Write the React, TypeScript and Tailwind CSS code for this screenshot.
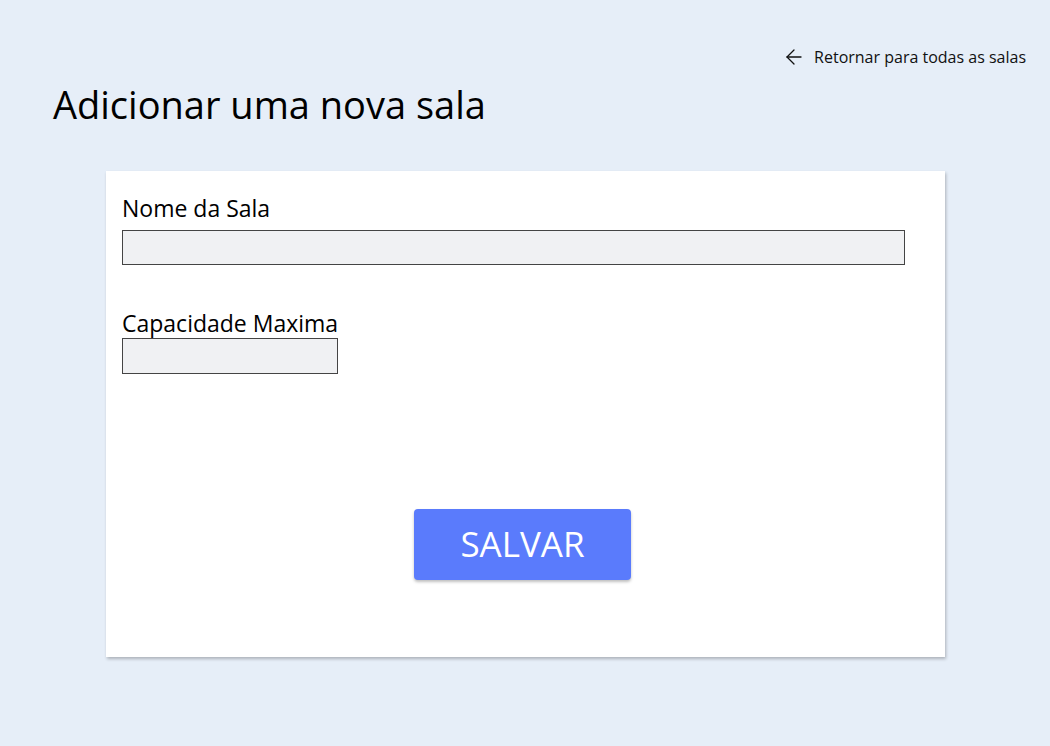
import { ArrowLeft } from "lucide-react";

const App = () => {
  return (
    <div
      className="min-h-screen w-full bg-[#e6eef8] text-black"
      style={{ fontFamily: "'Open Sans', Lato, sans-serif" }}
    >
      {/* Back link */}
      <div className="flex justify-end pt-[45px] pr-[24px]">
        <a href="#" className="flex items-center gap-[8px] text-[16px] text-[#111]">
          <ArrowLeft size={24} strokeWidth={1.3} />
          Retornar para todas as salas
        </a>
      </div>

      {/* Title */}
      <h1 className="pl-[53px] mt-[12px] text-[38px] leading-[46px] font-normal">
        Adicionar uma nova sala
      </h1>

      {/* Card */}
      <div className="ml-[106px] mt-[44px] w-[839px] h-[486px] bg-white shadow-[1px_2px_3px_rgba(0,0,0,0.25)] px-4 pt-[22px]">
        <label className="block text-[23px] leading-[30px]">Nome da Sala</label>
        <input
          type="text"
          className="mt-[7px] block w-[783px] h-[35px] bg-[#f0f1f3] border border-[#444]"
        />

        <label className="block mt-[43px] text-[23px] leading-[30px]">Capacidade Maxima</label>
        <input
          type="text"
          className="block w-[216px] h-[36px] bg-[#f0f1f3] border border-[#444]"
        />

        <div className="flex justify-center mt-[135px] pr-[6px]">
          <button
            type="button"
            className="w-[217px] h-[71px] rounded-[4px] bg-[#5a7bfc] text-white text-[35px] shadow-[0_2px_3px_rgba(0,0,0,0.25)]"
          >
            SALVAR
          </button>
        </div>
      </div>
    </div>
  );
};

export default App;
